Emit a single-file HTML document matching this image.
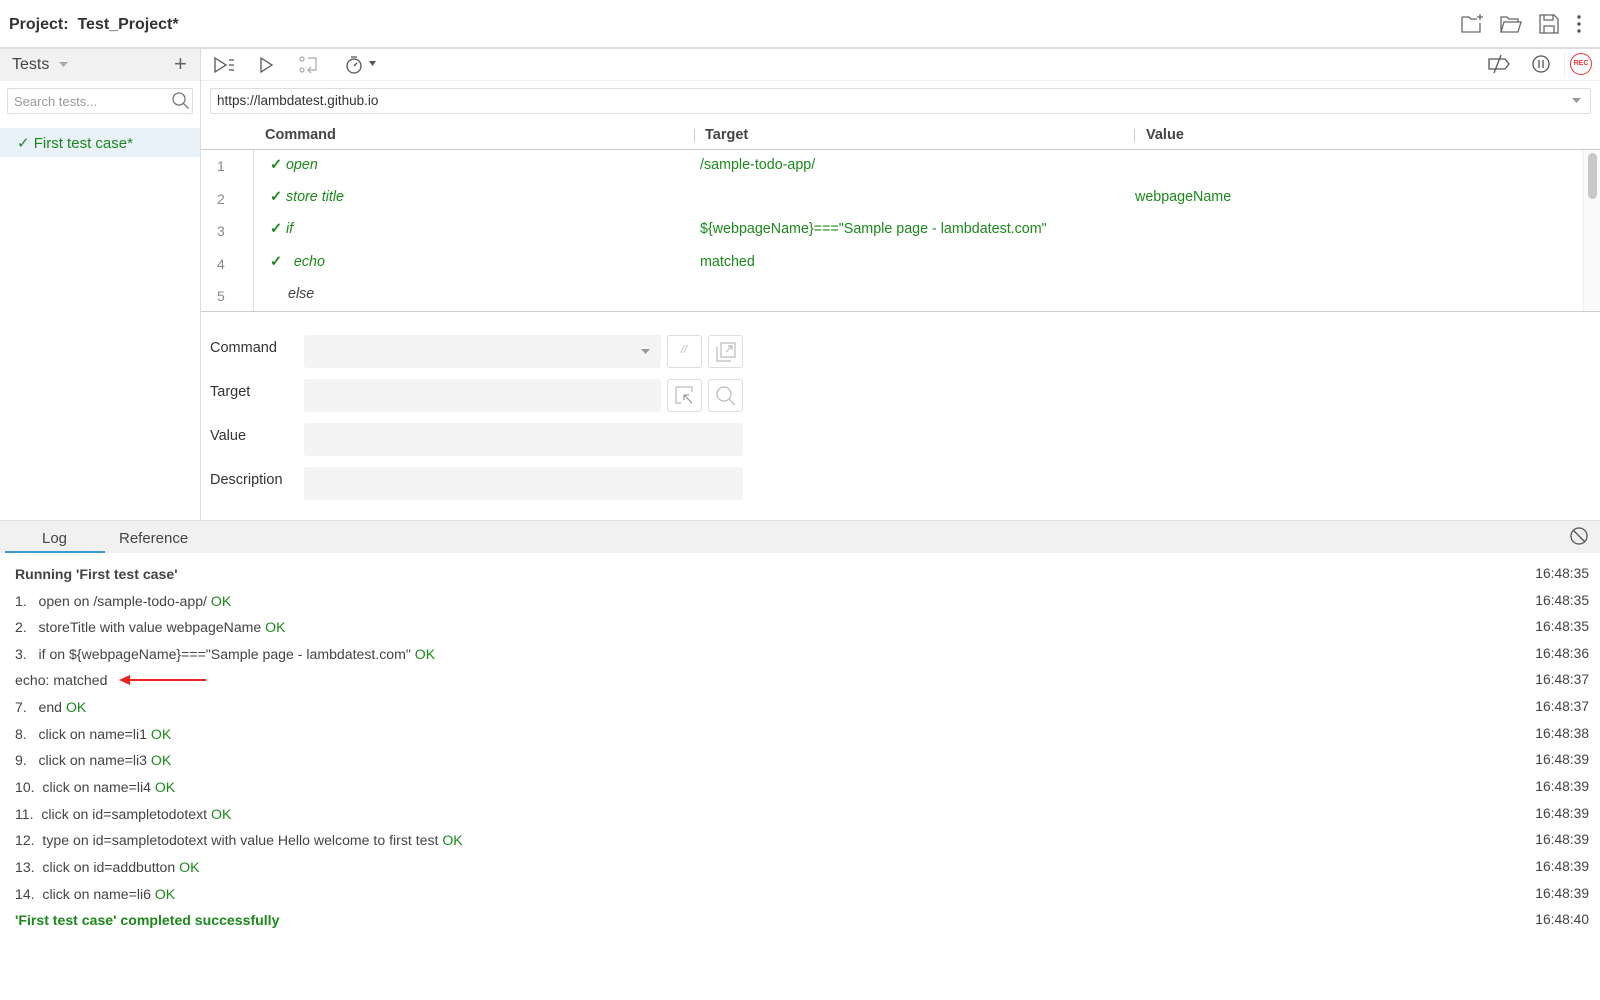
<!DOCTYPE html>
<html><head><meta charset="utf-8"><style>
*{box-sizing:border-box;margin:0;padding:0}
body{width:1600px;height:1000px;background:#fff;font-family:"Liberation Sans",Helvetica,sans-serif;color:#333;position:relative;overflow:hidden;font-size:14px}
.a{position:absolute;white-space:nowrap}
.g{color:#1a8a1a}
svg{position:absolute;overflow:visible}
.lg{position:absolute;left:15px;font-size:14.1px;color:#444}
.ts{position:absolute;right:11px;font-size:13.8px;color:#444}
.in{position:absolute;background:#f4f4f4;border-radius:3px}
.bt{position:absolute;width:35px;height:33px;border:1px solid #ddd;border-radius:3px;background:#fff}
</style></head><body>
<div class="a" style="left:9px;top:16px;font-size:16px;font-weight:bold;color:#333">Project:&nbsp; Test_Project*</div>
<svg width="24" height="24" style="left:1460px;top:12px" fill="none" stroke="#666" stroke-width="1.3"><path d="M2 5h7l2 2h6M2 5v15h18v-9"/><path d="M20 2v6M17 5h6"/></svg>
<svg width="24" height="24" style="left:1499px;top:12px" fill="none" stroke="#666" stroke-width="1.3"><path d="M2 20V5h6l2 2h9v3M2 20l3-10h17l-3 10z"/></svg>
<svg width="24" height="24" style="left:1537px;top:12px" fill="none" stroke="#666" stroke-width="1.3"><path d="M3 3h14l4 4v14H3z"/><path d="M7 3v5h9V3M7 21v-7h10v7"/></svg>
<svg width="6" height="20" style="left:1576px;top:14px" fill="#555"><circle cx="3" cy="3" r="1.7"/><circle cx="3" cy="10" r="1.7"/><circle cx="3" cy="17" r="1.7"/></svg>
<div class="a" style="left:0;top:47px;width:1600px;height:2px;background:#ddd"></div>
<!-- sidebar -->
<div class="a" style="left:0;top:49px;width:200px;height:32px;background:#f1f1f1"></div>
<div class="a" style="left:12px;top:56px;font-size:16px;color:#444">Tests</div>
<svg width="10" height="6" style="left:59px;top:62px"><path d="M0 0h9l-4.5 5z" fill="#aaa"/></svg>
<div class="a" style="left:174px;top:51px;font-size:22px;color:#666;font-weight:300">+</div>
<div class="a" style="left:7px;top:88px;width:186px;height:26px;border:1px solid #ddd;border-radius:2px"></div>
<div class="a" style="left:14px;top:94px;font-size:13px;color:#999">Search tests...</div>
<svg width="18" height="18" style="left:172px;top:92px" fill="none" stroke="#777" stroke-width="1.3"><circle cx="7" cy="7" r="6"/><path d="M11.5 11.5l5 5"/></svg>
<div class="a" style="left:0;top:128px;width:200px;height:29px;background:#e8f2f8"></div>
<div class="a g" style="left:17px;top:134px;font-size:15px">✓ First test case*</div>
<div class="a" style="left:200px;top:49px;width:1px;height:472px;background:#ddd"></div>
<!-- toolbar -->
<svg width="22" height="16" style="left:214px;top:57px" fill="none" stroke="#555" stroke-width="1.3"><path d="M1 1l11 7-11 7z"/><path d="M15 3h5M15 8h5M15 13h5"/></svg>
<svg width="14" height="16" style="left:260px;top:57px" fill="none" stroke="#555" stroke-width="1.3"><path d="M1 1l11 7-11 7z"/></svg>
<svg width="20" height="18" style="left:299px;top:56px" fill="none" stroke="#aaa" stroke-width="1.2"><circle cx="3" cy="3" r="2"/><circle cx="3" cy="14" r="2"/><path d="M9 2h8v12h-8M12 11l-3 3 3 3"/></svg>
<svg width="20" height="20" style="left:346px;top:55px" fill="none" stroke="#555" stroke-width="1.3"><circle cx="8" cy="11" r="7"/><path d="M5 2h6M8 11l3-3"/></svg>
<svg width="8" height="6" style="left:369px;top:61px"><path d="M0 0h7l-3.5 5z" fill="#555"/></svg>
<svg width="24" height="20" style="left:1487px;top:54px" fill="none" stroke="#555" stroke-width="1.3"><path d="M2 5h16l4 5-4 5H2z"/><path d="M14 1L7 19"/></svg>
<svg width="20" height="20" style="left:1531px;top:54px" fill="none" stroke="#555" stroke-width="1.3"><circle cx="10" cy="10" r="8"/><path d="M8 6v8M12 6v8"/></svg>
<div class="a" style="left:1564px;top:52px;width:1px;height:25px;background:#eee"></div>
<div class="a" style="left:1570px;top:53px;width:22px;height:22px;border:1.5px solid #e33;border-radius:50%;color:#e33;font-size:7px;font-weight:bold;text-align:center;line-height:19px">REC</div>
<div class="a" style="left:201px;top:80px;width:1399px;height:1px;background:#eee"></div>
<div class="a" style="left:210px;top:88px;width:1381px;height:26px;border:1px solid #ddd;border-radius:2px"></div>
<div class="a" style="left:217px;top:93px;font-size:13.5px;color:#333">https://lambdatest.github.io</div>
<svg width="10" height="6" style="left:1572px;top:98px"><path d="M0 0h9l-4.5 5z" fill="#999"/></svg>
<!-- table -->
<div class="a" style="left:265px;top:127px;font-size:14.5px;font-weight:bold;color:#444">Command</div>
<div class="a" style="left:694px;top:129px;width:1px;height:13px;background:#ccc"></div>
<div class="a" style="left:705px;top:127px;font-size:14.5px;font-weight:bold;color:#444">Target</div>
<div class="a" style="left:1134px;top:129px;width:1px;height:13px;background:#ccc"></div>
<div class="a" style="left:1146px;top:127px;font-size:14.5px;font-weight:bold;color:#444">Value</div>
<div class="a" style="left:201px;top:149px;width:1399px;height:1px;background:#ccc"></div>
<div class="a" style="left:253px;top:150px;width:1px;height:161px;background:#ddd"></div>
<div class="a" style="left:201px;top:311px;width:1399px;height:1px;background:#ccc"></div>
<div class="a" style="left:1583px;top:150px;width:17px;height:161px;background:#fafafa;border-left:1px solid #eee"></div>
<div class="a" style="left:1588px;top:153px;width:9px;height:46px;background:#c8c8c8;border-radius:5px"></div>
<div style="font-size:14.3px">
<div class="a" style="left:217px;top:158px;color:#888;font-size:14px">1</div>
<div class="a" style="left:217px;top:191px;color:#888;font-size:14px">2</div>
<div class="a" style="left:217px;top:223px;color:#888;font-size:14px">3</div>
<div class="a" style="left:217px;top:256px;color:#888;font-size:14px">4</div>
<div class="a" style="left:217px;top:288px;color:#888;font-size:14px">5</div>
<div class="a g" style="left:270px;top:157px"><b>✓</b> <i>open</i></div>
<div class="a g" style="left:270px;top:189px"><b>✓</b> <i>store title</i></div>
<div class="a g" style="left:270px;top:221px"><b>✓</b> <i>if</i></div>
<div class="a g" style="left:270px;top:254px"><b>✓</b> &nbsp;&nbsp;<i>echo</i></div>
<div class="a" style="left:288px;top:286px;color:#444"><i>else</i></div>
<div class="a g" style="left:700px;top:157px">/sample-todo-app/</div>
<div class="a g" style="left:700px;top:221px">${webpageName}==="Sample page - lambdatest.com"</div>
<div class="a g" style="left:700px;top:254px">matched</div>
<div class="a g" style="left:1135px;top:189px">webpageName</div>
</div>
<!-- form -->
<div class="a" style="left:210px;top:340px;font-size:14.5px;color:#333">Command</div>
<div class="a" style="left:210px;top:384px;font-size:14.5px;color:#333">Target</div>
<div class="a" style="left:210px;top:428px;font-size:14.5px;color:#333">Value</div>
<div class="a" style="left:210px;top:472px;font-size:14.5px;color:#333">Description</div>
<div class="in" style="left:304px;top:335px;width:357px;height:33px"></div>
<svg width="10" height="6" style="left:641px;top:349px"><path d="M0 0h9l-4.5 5z" fill="#999"/></svg>
<div class="in" style="left:304px;top:379px;width:357px;height:33px"></div>
<div class="in" style="left:304px;top:423px;width:439px;height:33px"></div>
<div class="in" style="left:304px;top:467px;width:439px;height:33px"></div>
<div class="bt" style="left:667px;top:335px"><div class="a" style="left:13px;top:8px;font-size:11px;color:#bbb;font-style:italic">//</div></div>
<div class="bt" style="left:708px;top:335px"><svg width="20" height="20" style="left:7px;top:6px" fill="none" stroke="#bbb" stroke-width="1.2"><path d="M1 5v14h14"/><path d="M5 1h14v14H5z"/><path d="M10 10l6-6M12 4h4v4"/></svg></div>
<div class="bt" style="left:667px;top:379px"><svg width="20" height="20" style="left:7px;top:6px" fill="none" stroke="#bbb" stroke-width="1.2"><path d="M1 1h16v5M1 1v16h5"/><path d="M9 9l8 8M9 9h5M9 9v5" stroke="#999"/></svg></div>
<div class="bt" style="left:708px;top:379px"><svg width="22" height="22" style="left:6px;top:5px" fill="none" stroke="#bbb" stroke-width="1.2"><circle cx="9" cy="9" r="7"/><path d="M14 14l6 6"/></svg></div>
<!-- log -->
<div class="a" style="left:0;top:520px;width:1600px;height:1px;background:#ddd"></div>
<div class="a" style="left:0;top:521px;width:1600px;height:32px;background:#f1f1f1"></div>
<div class="a" style="left:42px;top:530px;font-size:15px;color:#444">Log</div>
<div class="a" style="left:119px;top:530px;font-size:15px;color:#444">Reference</div>
<div class="a" style="left:5px;top:551px;width:100px;height:2px;background:#3a9ad9"></div>
<svg width="20" height="20" style="left:1570px;top:527px" fill="none" stroke="#555" stroke-width="1.3"><circle cx="9" cy="9" r="8"/><path d="M3.5 3.5l11 11"/></svg>
<div class="lg" style="top:566px;font-weight:bold">Running 'First test case'</div>
<div class="lg" style="top:593px">1.&nbsp;&nbsp;&nbsp;open on /sample-todo-app/ <span class="g">OK</span></div>
<div class="lg" style="top:619px">2.&nbsp;&nbsp;&nbsp;storeTitle with value webpageName <span class="g">OK</span></div>
<div class="lg" style="top:646px">3.&nbsp;&nbsp;&nbsp;if on ${webpageName}==="Sample page - lambdatest.com" <span class="g">OK</span></div>
<div class="lg" style="top:672px">echo: matched</div>
<svg width="90" height="12" style="left:118px;top:674px"><path d="M88 6H10" stroke="#e22" stroke-width="2"/><path d="M1 6l11-5v10z" fill="#e22"/></svg>
<div class="lg" style="top:699px">7.&nbsp;&nbsp;&nbsp;end <span class="g">OK</span></div>
<div class="lg" style="top:726px">8.&nbsp;&nbsp;&nbsp;click on name=li1 <span class="g">OK</span></div>
<div class="lg" style="top:752px">9.&nbsp;&nbsp;&nbsp;click on name=li3 <span class="g">OK</span></div>
<div class="lg" style="top:779px">10.&nbsp;&nbsp;click on name=li4 <span class="g">OK</span></div>
<div class="lg" style="top:806px">11.&nbsp;&nbsp;click on id=sampletodotext <span class="g">OK</span></div>
<div class="lg" style="top:832px">12.&nbsp;&nbsp;type on id=sampletodotext with value Hello welcome to first test <span class="g">OK</span></div>
<div class="lg" style="top:859px">13.&nbsp;&nbsp;click on id=addbutton <span class="g">OK</span></div>
<div class="lg" style="top:886px">14.&nbsp;&nbsp;click on name=li6 <span class="g">OK</span></div>
<div class="lg g" style="top:912px;font-weight:bold;color:#1a8a1a">'First test case' completed successfully</div>
<div class="ts" style="top:566px">16:48:35</div>
<div class="ts" style="top:593px">16:48:35</div>
<div class="ts" style="top:619px">16:48:35</div>
<div class="ts" style="top:646px">16:48:36</div>
<div class="ts" style="top:672px">16:48:37</div>
<div class="ts" style="top:699px">16:48:37</div>
<div class="ts" style="top:726px">16:48:38</div>
<div class="ts" style="top:752px">16:48:39</div>
<div class="ts" style="top:779px">16:48:39</div>
<div class="ts" style="top:806px">16:48:39</div>
<div class="ts" style="top:832px">16:48:39</div>
<div class="ts" style="top:859px">16:48:39</div>
<div class="ts" style="top:886px">16:48:39</div>
<div class="ts" style="top:912px">16:48:40</div>
</body></html>
